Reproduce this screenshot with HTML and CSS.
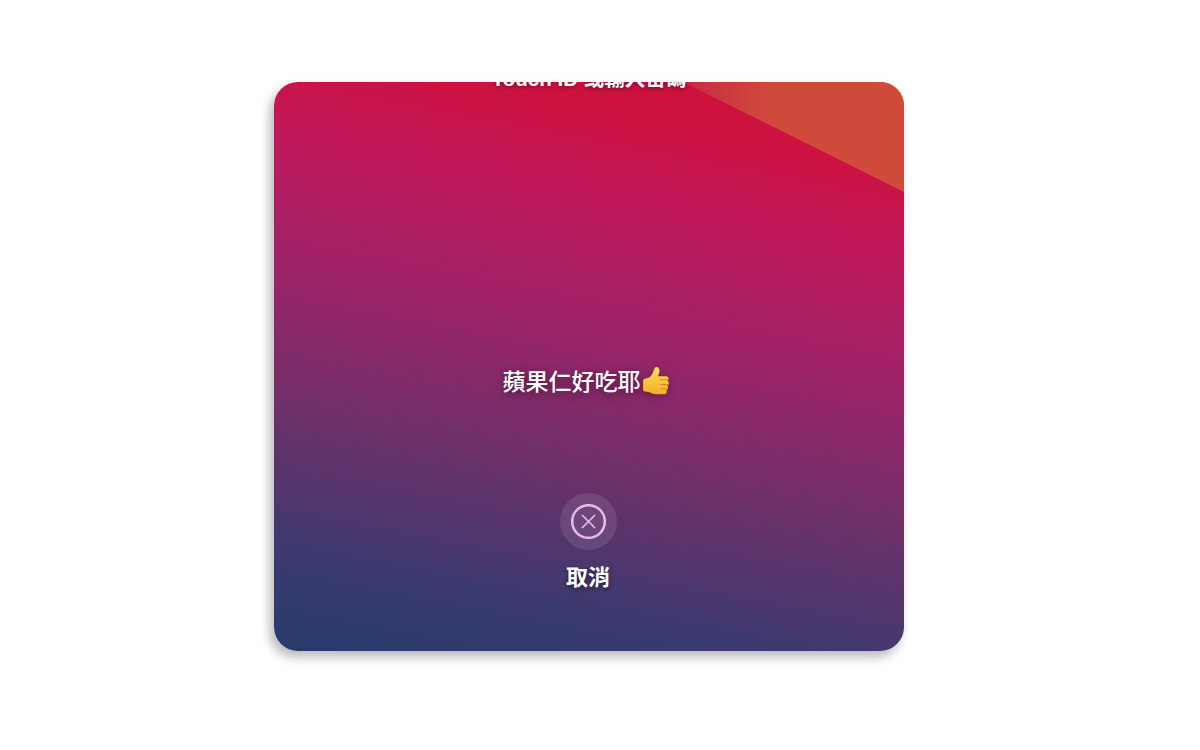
FILE: index.html
```html
<!DOCTYPE html>
<html lang="zh-Hant">
<head>
<meta charset="utf-8">
<title>Touch ID</title>
<link rel="stylesheet" href="styles.css">
</head>
<body>
<main class="stage">
  <section class="dialog">
    <div class="wedge"></div>
    <h1 class="title">Touch ID 或輸入密碼</h1>
    <p class="message">蘋果仁好吃耶<svg class="thumb" viewBox="0 0 30 30" aria-hidden="true">
      <defs>
        <linearGradient id="thumbFill" x1="0" y1="0" x2="0" y2="1">
          <stop offset="0" stop-color="#ffdc5e"/>
          <stop offset="1" stop-color="#f5ae22"/>
        </linearGradient>
      </defs>
      <path d="M2 14.5c0-1.5 1-2.5 2.6-2.5 2.4 0 4.2-1 5.6-3.2 1.2-1.9 2-3.6 2.4-5.4.3-1.4 1.1-2.4 2.4-2.4 1.8 0 2.9 1.6 2.9 3.7 0 2-.7 3.600-1.500 5.300h7.600c1.600 0 2.700 1.100 2.700 2.500 0 .9-.4 1.600-1 2.100.8.500 1.300 1.300 1.300 2.200 0 1-.6 1.900-1.500 2.300.5.500.8 1.200.8 1.900 0 1.100-.7 2-1.700 2.400.3.400.4.900.4 1.400 0 1.500-1.200 2.600-2.900 2.600h-7c-3 0-4.800-.9-6.500-1.700-1-.5-2-.8-3.200-.8C3 25 2 24 2 22.600z" fill="url(#thumbFill)"/>
      <path d="M18.500 13.300h7.300M19 17.800h7.500M19.500 22h6" fill="none" stroke="#c98a1a" stroke-width="1" stroke-linecap="round"/>
    </svg></p>
    <div class="cancel">
      <span class="cancel-disc">
        <svg class="cancel-icon" viewBox="0 0 35 35" aria-hidden="true">
          <circle class="cancel-ring" cx="17.500" cy="17.500" r="16.300"/>
          <path class="cancel-cross" d="M11 11l13 13M24 11l-13 13"/>
        </svg>
      </span>
      <span class="cancel-label">取消</span>
    </div>
  </section>
</main>
</body>
</html>
```

FILE: styles.css
```css
html, body {
  margin: 0;
  background: #ffffff;
}

.stage {
  height: 750px;
  box-sizing: border-box;
  padding: 82px 0 0 274px;
  overflow: hidden;
}

.stage::before {
  content: "";
  position: absolute;
  left: 274px;
  top: 82px;
  width: 630px;
  height: 569px;
  border-radius: 24px;
  box-shadow: -4px 6px 11px rgba(0, 0, 0, 0.28);
}

.dialog {
  position: relative;
  width: 630px;
  height: 569px;
  border-radius: 24px;
  overflow: hidden;
  display: flex;
  flex-direction: column;
  align-items: center;
  font-family: "Liberation Sans", "Noto Sans CJK TC", sans-serif;
  color: #ffffff;
  background: linear-gradient(191deg, #d0113a 0%, #cc1240 13%, #c2185a 24%, #9e2368 44%, #6d3069 65%, #3b3a70 86%, #263b6b 100%);
}

.wedge {
  position: absolute;
  inset: 0;
  background: linear-gradient(90deg, #c92a40 409px, #d04a3c 500px, #d04a3a 630px);
  clip-path: polygon(409px 0, 630px 110px, 630px 0);
}

.title {
  position: relative;
  margin: -17px 0 0;
  font-size: 20.500px;
  line-height: 28px;
  font-weight: 700;
  text-shadow: 0 1px 5px rgba(0, 0, 0, 0.5);
}

.message {
  position: relative;
  margin: 273px 0 0;
  width: 630px;
  display: flex;
  justify-content: center;
  align-items: center;
  padding-right: 4px;
  box-sizing: border-box;
  font-size: 23px;
  line-height: 30px;
  font-weight: 500;
  text-shadow: 0 2px 8px rgba(0, 0, 0, 0.5);
}

.thumb {
  width: 31px;
  height: 31px;
  flex: none;
  filter: drop-shadow(0 2px 4px rgba(0, 0, 0, 0.3));
}

.cancel {
  position: relative;
  margin-top: 96px;
  display: flex;
  flex-direction: column;
  align-items: center;
  margin-left: -2px;
}

.cancel-disc {
  width: 57px;
  height: 57px;
  border-radius: 50%;
  background: rgba(255, 255, 255, 0.1);
  display: flex;
  align-items: center;
  justify-content: center;
}

.cancel-icon {
  width: 35px;
  height: 35px;
  fill: none;
  stroke: #e8b8ec;
}

.cancel-ring {
  stroke-width: 2.500;
}

.cancel-cross {
  stroke-width: 1.700;
}

.cancel-label {
  margin-top: 12px;
  font-size: 22px;
  line-height: 32px;
  font-weight: 700;
  text-shadow: 0 2px 4px rgba(0, 0, 0, 0.55);
}
```
